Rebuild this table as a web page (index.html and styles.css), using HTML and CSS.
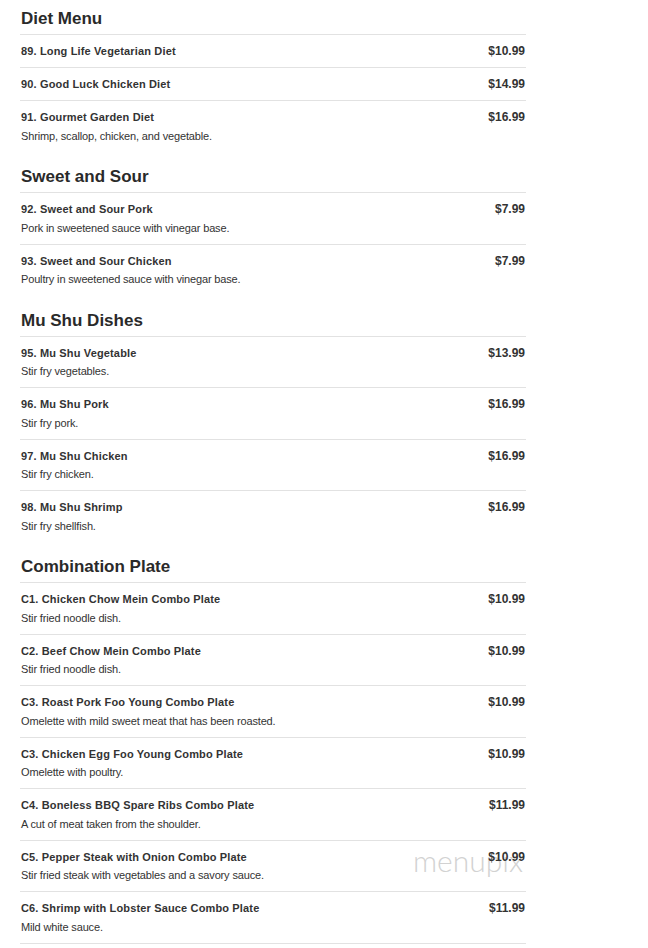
FILE: index.html
```html
<!DOCTYPE html>
<html lang="en">
<head>
<meta charset="utf-8">
<title>Menu</title>
<link rel="stylesheet" href="styles.css">
</head>
<body>
<main class="menu">
  <section class="section">
    <h2 class="section-title">Diet Menu</h2>
    <div class="item"><div class="info"><div class="name">89. Long Life Vegetarian Diet</div></div><div class="price">$10.99</div></div>
    <div class="item"><div class="info"><div class="name">90. Good Luck Chicken Diet</div></div><div class="price">$14.99</div></div>
    <div class="item"><div class="info"><div class="name">91. Gourmet Garden Diet</div><div class="desc">Shrimp, scallop, chicken, and vegetable.</div></div><div class="price">$16.99</div></div>
  </section>
  <section class="section">
    <h2 class="section-title">Sweet and Sour</h2>
    <div class="item"><div class="info"><div class="name">92. Sweet and Sour Pork</div><div class="desc">Pork in sweetened sauce with vinegar base.</div></div><div class="price">$7.99</div></div>
    <div class="item"><div class="info"><div class="name">93. Sweet and Sour Chicken</div><div class="desc">Poultry in sweetened sauce with vinegar base.</div></div><div class="price">$7.99</div></div>
  </section>
  <section class="section">
    <h2 class="section-title">Mu Shu Dishes</h2>
    <div class="item"><div class="info"><div class="name">95. Mu Shu Vegetable</div><div class="desc">Stir fry vegetables.</div></div><div class="price">$13.99</div></div>
    <div class="item"><div class="info"><div class="name">96. Mu Shu Pork</div><div class="desc">Stir fry pork.</div></div><div class="price">$16.99</div></div>
    <div class="item"><div class="info"><div class="name">97. Mu Shu Chicken</div><div class="desc">Stir fry chicken.</div></div><div class="price">$16.99</div></div>
    <div class="item"><div class="info"><div class="name">98. Mu Shu Shrimp</div><div class="desc">Stir fry shellfish.</div></div><div class="price">$16.99</div></div>
  </section>
  <section class="section">
    <h2 class="section-title">Combination Plate</h2>
    <div class="item"><div class="info"><div class="name">C1. Chicken Chow Mein Combo Plate</div><div class="desc">Stir fried noodle dish.</div></div><div class="price">$10.99</div></div>
    <div class="item"><div class="info"><div class="name">C2. Beef Chow Mein Combo Plate</div><div class="desc">Stir fried noodle dish.</div></div><div class="price">$10.99</div></div>
    <div class="item"><div class="info"><div class="name">C3. Roast Pork Foo Young Combo Plate</div><div class="desc">Omelette with mild sweet meat that has been roasted.</div></div><div class="price">$10.99</div></div>
    <div class="item"><div class="info"><div class="name">C3. Chicken Egg Foo Young Combo Plate</div><div class="desc">Omelette with poultry.</div></div><div class="price">$10.99</div></div>
    <div class="item"><div class="info"><div class="name">C4. Boneless BBQ Spare Ribs Combo Plate</div><div class="desc">A cut of meat taken from the shoulder.</div></div><div class="price">$11.99</div></div>
    <div class="item has-mark"><div class="info"><div class="name">C5. Pepper Steak with Onion Combo Plate</div><div class="desc">Stir fried steak with vegetables and a savory sauce.</div></div><div class="price">$10.99</div><span class="watermark">menupix</span></div>
    <div class="item item-last"><div class="info"><div class="name">C6. Shrimp with Lobster Sauce Combo Plate</div><div class="desc">Mild white sauce.</div></div><div class="price">$11.99</div></div>
  </section>
</main>
</body>
</html>
```

FILE: styles.css
```css
html, body {
  background: #ffffff;
}
body {
  margin: 8px 0 0 20px;
  font-family: "Liberation Sans", Arial, sans-serif;
  color: #333333;
}
.menu {
  width: 506px;
}
.section + .section {
  margin-top: 14.5px;
}
.section-title {
  margin: 0;
  padding: 1px 0 5px 1px;
  font-size: 17px;
  line-height: 20px;
  font-weight: bold;
  color: #2a2a2a;
}
.item {
  display: flex;
  justify-content: space-between;
  align-items: flex-start;
  border-top: 1px solid #e2e2e2;
  padding: 8px 1px 8px 1px;
}
.item-last {
  border-bottom: 1px solid #e2e2e2;
}
.has-mark {
  position: relative;
}
.name {
  font-size: 11px;
  line-height: 16px;
  font-weight: bold;
  letter-spacing: 0.15px;
  color: #333333;
}
.desc {
  margin-top: 2.5px;
  font-size: 11px;
  line-height: 16px;
  letter-spacing: -0.15px;
  color: #333333;
}
.price {
  position: relative;
  z-index: 1;
  font-size: 12px;
  line-height: 16px;
  font-weight: bold;
  color: #333333;
}
.watermark {
  position: absolute;
  right: 3px;
  top: 1px;
  font-family: Lato, "Open Sans", sans-serif;
  font-weight: 300;
  font-size: 30px;
  line-height: 36px;
  letter-spacing: 0;
  color: #d2d2d2;
  pointer-events: none;
}
```
